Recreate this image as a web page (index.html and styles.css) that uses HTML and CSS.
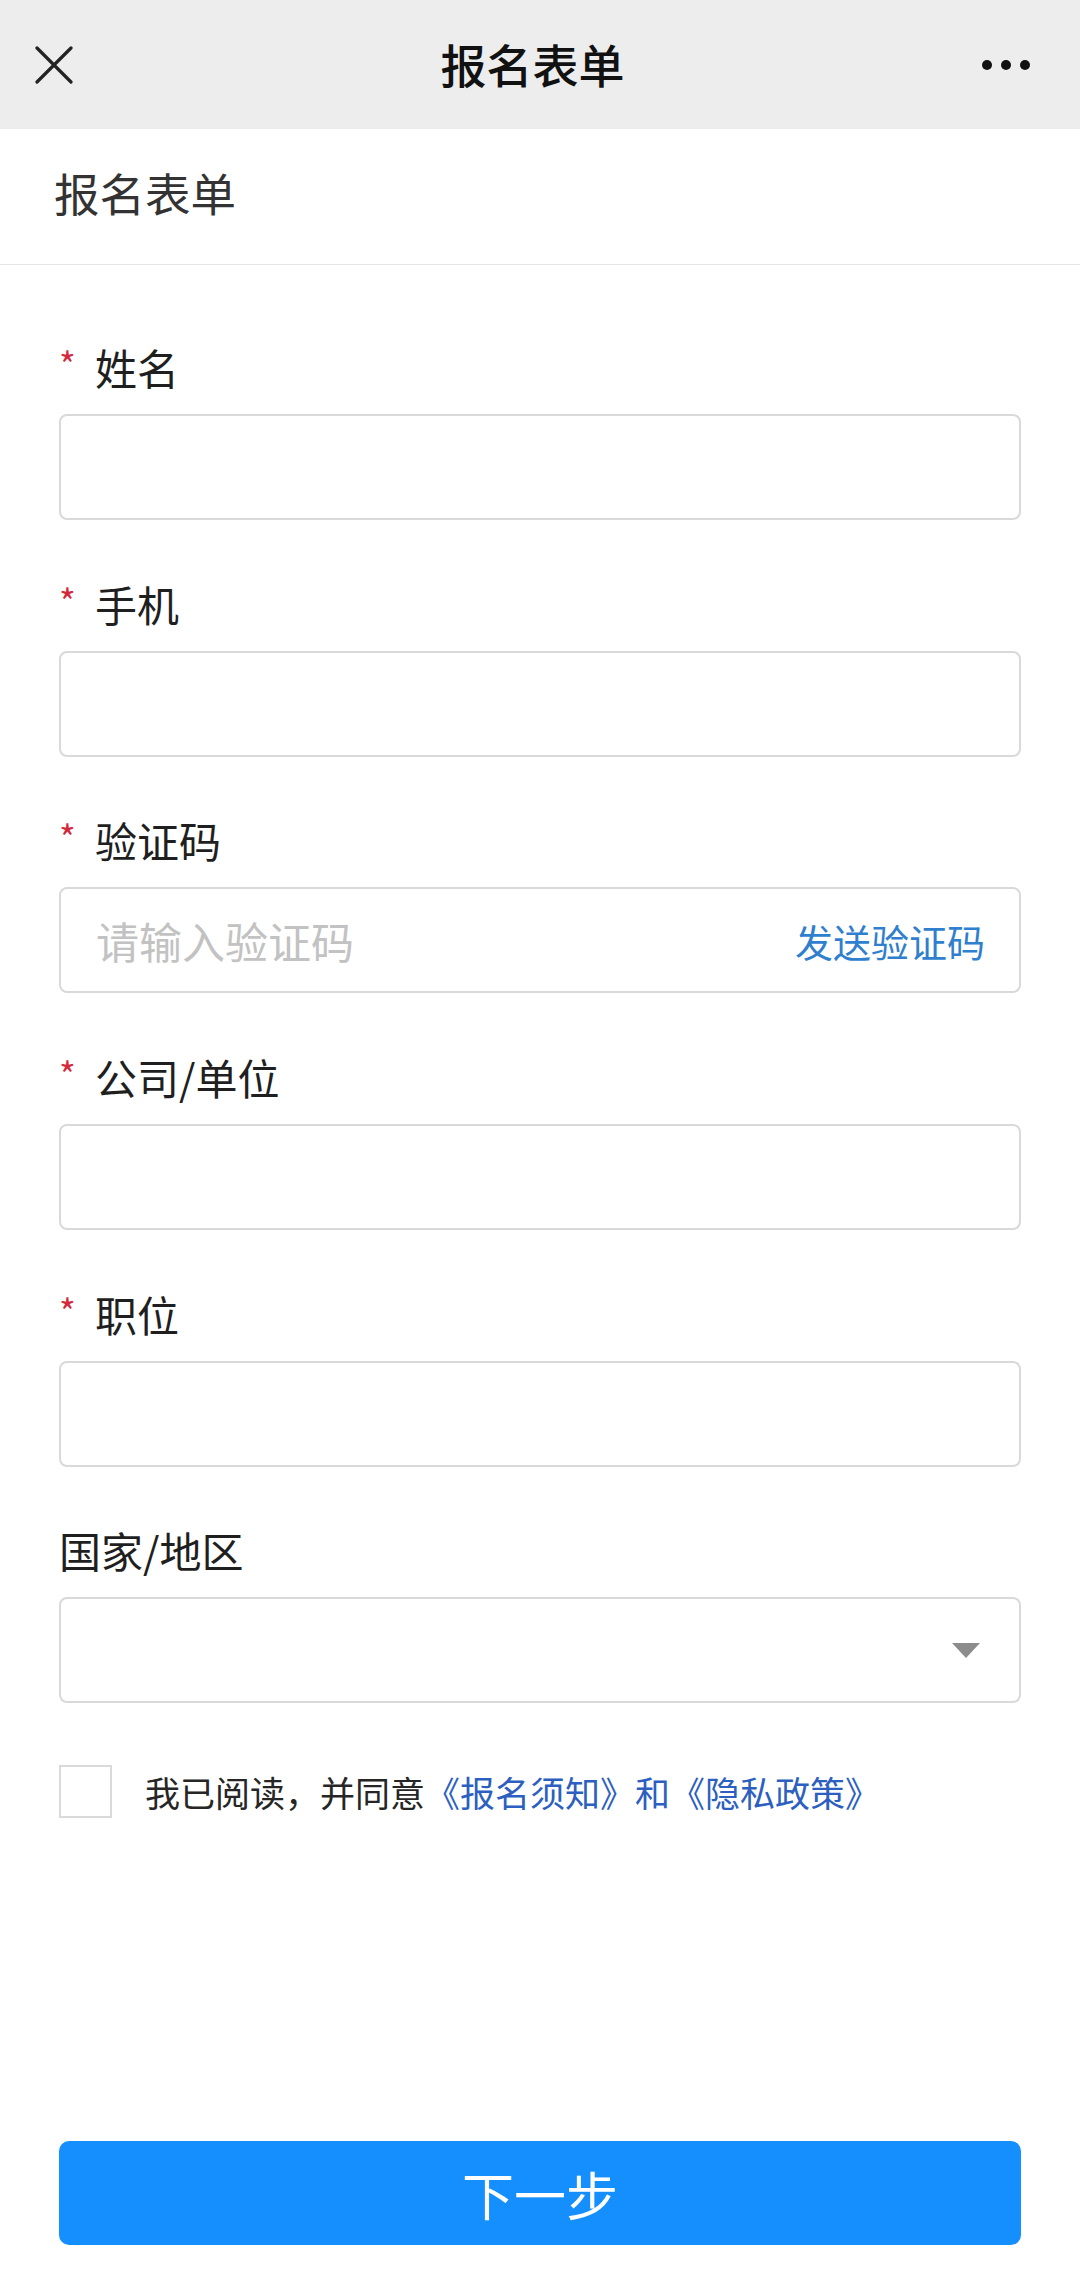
FILE: index.html
```html
<!DOCTYPE html>
<html lang="zh-CN">

<head>
    <meta charset="UTF-8">
    <meta name="viewport" content="width=device-width, initial-scale=1.0">
    <title>报名表单</title>

    <link rel="stylesheet" href="styles.css">
</head>

<body>
    <header class="topbar">
        <div class="topbar-left">
            <svg class="icon-close" width="38" height="38" viewBox="0 0 38 38">
                <path d="M2 2 L36 36 M36 2 L2 36" stroke="#222" stroke-width="3.2" stroke-linecap="round" fill="none" />
            </svg>
        </div>
        <div class="topbar-title">报名表单</div>
        <div class="topbar-right">
            <span class="dot"></span>
            <span class="dot"></span>
            <span class="dot"></span>
        </div>
    </header>

    <div class="page-title">报名表单</div>

    <form class="form">
        <div class="field">
            <label class="field-label"><span class="required">*</span>姓名</label>
            <div class="input-box"></div>
        </div>

        <div class="field">
            <label class="field-label"><span class="required">*</span>手机</label>
            <div class="input-box"></div>
        </div>

        <div class="field">
            <label class="field-label"><span class="required">*</span>验证码</label>
            <div class="input-box input-code">
                <span class="placeholder">请输入验证码</span>
                <span class="send-code">发送验证码</span>
            </div>
        </div>

        <div class="field">
            <label class="field-label"><span class="required">*</span>公司/单位</label>
            <div class="input-box"></div>
        </div>

        <div class="field">
            <label class="field-label"><span class="required">*</span>职位</label>
            <div class="input-box"></div>
        </div>

        <div class="field">
            <label class="field-label">国家/地区</label>
            <div class="input-box input-select">
                <span class="caret"></span>
            </div>
        </div>

        <div class="agree">
            <span class="checkbox"></span>
            <span class="agree-text">我已阅读，并同意<a class="link">《报名须知》和《隐私政策》</a></span>
        </div>
    </form>

    <footer class="footer">
        <div class="btn-next">下一步</div>
    </footer>
</body>

</html>
```

FILE: styles.css
```css
body {
    font-family: "Noto Sans CJK SC", "Noto Sans", sans-serif;
    background-color: #fff;
    color: #1f1f1f;
    margin: 0;
    min-height: 100vh;
    display: flex;
    flex-direction: column;
}

.topbar {
    height: 129px;
    background-color: #ededed;
    display: grid;
    grid-template-columns: 1fr auto 1fr;
    align-items: center;
    padding: 0 50px 0 35px;
}

.topbar-left {
    display: flex;
    align-items: center;
}

.icon-close {
    display: block;
    margin-top: 1px;
}

.topbar-title {
    font-size: 46px;
    font-weight: 500;
    color: #111;
    margin-top: -4px;
}

.topbar-right {
    display: flex;
    justify-content: flex-end;
    gap: 9px;
}

.dot {
    width: 10px;
    height: 10px;
    border-radius: 50%;
    background-color: #111;
}

.page-title {
    height: 136px;
    box-sizing: border-box;
    display: flex;
    align-items: center;
    padding: 0 0 10px 54px;
    font-size: 45.5px;
    color: #333;
    border-bottom: 1px solid #e6e6e6;
}

.form {
    padding: 76px 59px 0;
    display: flex;
    flex-direction: column;
    gap: 57.7px;
}

.field-label {
    display: flex;
    align-items: center;
    height: 56px;
    font-size: 42px;
    line-height: 56px;
    color: #1f1f1f;
    margin-bottom: 17px;
    padding-bottom: 4px;
    box-sizing: border-box;
}

.required {
    color: #d4283b;
    font-size: 36px;
    width: 36px;
    line-height: 1;
    margin-top: -8px;
}

.input-box {
    height: 106px;
    box-sizing: border-box;
    border: 2px solid #d9d9d9;
    border-radius: 8px;
    display: flex;
    align-items: center;
    justify-content: space-between;
    padding: 0 34px 0 35px;
}

.placeholder {
    font-size: 43px;
    color: #c2c2c2;
}

.send-code {
    font-size: 38px;
    color: #2f7fce;
}

.input-select {
    justify-content: flex-end;
    padding-right: 39px;
}

.caret {
    width: 0;
    height: 0;
    border-left: 14px solid transparent;
    border-right: 14px solid transparent;
    border-top: 15px solid #8c8c8c;
}

.agree {
    display: flex;
    align-items: center;
    gap: 33px;
    margin-top: 4px;
}

.checkbox {
    width: 53px;
    height: 53px;
    box-sizing: border-box;
    border: 2px solid #dadada;
}

.agree-text {
    font-size: 35px;
    color: #262626;
}

.link {
    color: #2c5fbf;
}

.footer {
    margin-top: auto;
    padding: 0 59px 45px;
}

.btn-next {
    height: 104px;
    border-radius: 10px;
    background-color: #168ffe;
    color: #fff;
    font-size: 52px;
    display: flex;
    align-items: center;
    justify-content: center;
}
```
